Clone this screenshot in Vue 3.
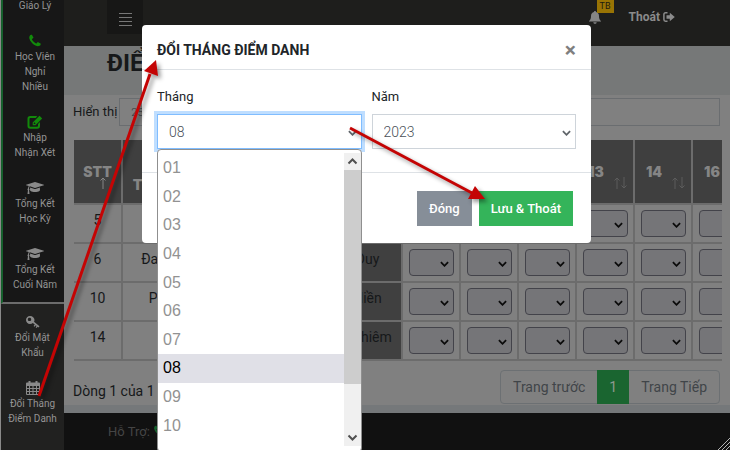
<template>
  <div class="page">
    <aside class="sidebar">
      <nav class="menu menu-main">
        <a v-for="item in mainMenu" :key="item.lines.join()" href="#" class="menu-item">
          <svg v-if="item.icon" class="menu-icon" :class="item.tone" :viewBox="icons[item.icon].box">
            <path :d="icons[item.icon].d" fill-rule="evenodd" />
          </svg>
          <span v-for="line in item.lines" :key="line">{{ line }}</span>
        </a>
      </nav>
      <nav class="menu menu-user">
        <a v-for="item in userMenu" :key="item.lines.join()" href="#" class="menu-item">
          <svg class="menu-icon" :viewBox="icons[item.icon].box">
            <path :d="icons[item.icon].d" fill-rule="evenodd" />
          </svg>
          <span v-for="line in item.lines" :key="line">{{ line }}</span>
        </a>
      </nav>
    </aside>

    <main class="main">
      <header class="topbar">
        <button class="toggle" type="button" aria-label="Menu">
          <i></i><i></i><i></i><i></i>
        </button>
        <div class="topbar-right">
          <span class="bell">
            <svg viewBox="0 0 12 13"><path d="M6 0c.6 0 1 .4 1 1 2 .5 3 2 3 4 0 2.700.6 3.900 2 5v.6H0V10c1.400-1.100 2-2.300 2-5 0-2 1-3.500 3-4 0-.6.4-1 1-1zM4.300 11.200h3.400C7.500 12.200 7 12.800 6 12.800s-1.500-.6-1.700-1.600z" /></svg>
            <b class="badge">TB</b>
          </span>
          <a href="#" class="logout">
            Thoát
            <svg viewBox="0 0 12 10"><path d="M4.500.8H2.500C1.500.8.9 1.500.9 2.500v5c0 1 .6 1.700 1.600 1.700h2" fill="none" stroke="currentColor" stroke-width="1.500" /><path d="M3.500 3.300h3.300V.8L11.800 5 6.800 9.200V6.700H3.500z" /></svg>
          </a>
        </div>
      </header>

      <h1 class="title">ĐIỂM DANH</h1>

      <section class="content">
        <div class="filter">
          <label for="rows">Hiển thị</label>
          <select id="rows" v-model="rows" class="rows">
            <option>25</option>
            <option>50</option>
          </select>
        </div>

        <div class="table-wrap">
          <table>
            <colgroup>
              <col class="c-stt"><col class="c-saint"><col class="c-family"><col class="c-name">
              <col v-for="(d, i) in days" :key="i" class="c-day">
            </colgroup>
            <thead>
              <tr>
                <th class="stt">STT
                  <svg class="sort-up" viewBox="0 0 6 12"><path d="M3 12V1M.5 3.500 3 1l2.500 2.500" /></svg>
                </th>
                <th class="saint">TÊN<br>THÁNH</th>
                <th></th>
                <th></th>
                <th v-for="(d, i) in days" :key="i" class="day">{{ d }}
                  <svg class="sort" viewBox="0 0 13 12"><path d="M3 12V1M.5 3.500 3 1l2.500 2.500M10 0v11M7.500 8.500 10 11l2.500-2.500" /></svg>
                </th>
              </tr>
            </thead>
            <tbody>
              <tr v-for="s in students" :key="s.stt">
                <td>{{ s.stt }}</td>
                <td>{{ s.saint }}</td>
                <td></td>
                <td class="name">{{ s.name }}</td>
                <td v-for="(d, i) in days" :key="i" class="mark">
                  <div class="mark-box">
                    <select :aria-label="'Ngày ' + d"><option></option><option>P</option><option>V</option></select>
                    <svg class="caret" viewBox="0 0 10 6"><path d="M1 1l4 4 4-4" /></svg>
                  </div>
                </td>
              </tr>
            </tbody>
          </table>
        </div>

        <div class="table-foot">
          <span class="summary">Dòng 1 của 1</span>
          <nav class="pages">
            <a href="#">Trang trước</a>
            <a href="#" class="active">1</a>
            <a href="#">Trang Tiếp</a>
          </nav>
        </div>
      </section>

      <footer class="footer">
        Hỗ Trợ:
        <svg class="menu-icon" :viewBox="icons.phone.box"><path :d="icons.phone.d" /></svg>
      </footer>
    </main>

    <div class="overlay">
      <form class="modal" role="dialog" aria-labelledby="modal-title" @submit.prevent>
        <div class="modal-header">
          <h2 id="modal-title">ĐỔI THÁNG ĐIỂM DANH</h2>
          <button type="button" class="close" aria-label="Đóng">×</button>
        </div>
        <div class="modal-body">
          <div class="field">
            <label for="month">Tháng</label>
            <div class="control">
              <select id="month" v-model="month" class="focused">
                <option v-for="m in months" :key="m">{{ m }}</option>
              </select>
              <svg class="caret" viewBox="0 0 10 6"><path d="M1 1l4 4 4-4" /></svg>
              <div class="dropdown">
                <ul role="listbox" aria-label="Tháng">
                  <li
                    v-for="m in months"
                    :key="m"
                    role="option"
                    :aria-selected="m === month"
                    :class="{ selected: m === month }"
                    @click="month = m"
                  >{{ m }}</li>
                </ul>
                <div class="scrollbar">
                  <svg viewBox="0 0 17 17"><path d="M4.500 10.500l4-4 4 4" /></svg>
                  <div class="thumb"></div>
                  <svg viewBox="0 0 17 17"><path d="M4.500 6.500l4 4 4-4" /></svg>
                </div>
              </div>
            </div>
          </div>
          <div class="field">
            <label for="year">Năm</label>
            <div class="control">
              <select id="year" v-model="year">
                <option>2022</option>
                <option>2023</option>
              </select>
              <svg class="caret" viewBox="0 0 10 6"><path d="M1 1l4 4 4-4" /></svg>
            </div>
          </div>
        </div>
        <div class="modal-footer">
          <button type="button" class="btn btn-grey">Đóng</button>
          <button type="submit" class="btn btn-green">Lưu &amp; Thoát</button>
        </div>
      </form>
    </div>

    <!-- guide arrows -->
    <svg class="arrows" width="730" height="450" viewBox="0 0 730 450">
      <path d="M39 396L150 74" />
      <path class="head" d="M156 60l-12 11 14 5z" />
      <path d="M350 128L472 193" />
      <path class="head" d="M485 199l-10-13-7 13z" />
    </svg>
    <svg class="grip" viewBox="0 0 12 12"><path d="M0 12L12 0M4 12l8-8M8 12l4-4" /></svg>
  </div>
</template>

<script setup>
import { ref } from 'vue'

const month = ref('08')
const year = ref('2023')
const rows = ref('25')

const months = Array.from({ length: 10 }, (_, i) => String(i + 1).padStart(2, '0'))
const days = ['', '', '', '13', '14', '16']

const students = [
  { stt: 5, saint: '', name: '' },
  { stt: 6, saint: 'Đa Minh', name: 'Duy' },
  { stt: 10, saint: 'Phêrô', name: 'Hiền' },
  { stt: 14, saint: '', name: 'Nghiêm' }
]

const mainMenu = [
  { lines: ['Giáo Lý'] },
  { icon: 'phone', tone: 'green', lines: ['Học Viên', 'Nghỉ', 'Nhiều'] },
  { icon: 'edit', tone: 'green', lines: ['Nhập', 'Nhận Xét'] },
  { icon: 'cap', lines: ['Tổng Kết', 'Học Kỳ'] },
  { icon: 'cap', lines: ['Tổng Kết', 'Cuối Năm'] }
]
const userMenu = [
  { icon: 'key', lines: ['Đổi Mật', 'Khẩu'] },
  { icon: 'calendar', lines: ['Đổi Tháng', 'Điểm Danh'] }
]

const icons = {
  phone: {
    box: '-100 32 1608 1720',
    d: 'M1408 1240q0 27-10 70.5t-21 68.5q-21 50-122 106-94 51-186 51-27 0-53-3.5t-57.5-12.5-47-14.5-55.5-20.5-49-18q-98-35-175-83-127-79-264-216t-216-264q-48-77-83-175-3-9-18-49t-20.5-55.5-14.5-47-12.5-57.5-3.5-53q0-92 51-186 56-101 106-122 25-11 68.5-21t70.5-10q14 0 21 3 18 6 53 76 11 19 30 54t35 63.5 31 53.5q3 4 17.5 25t21.5 35.5 7 28.5q0 20-28.5 50t-62 55-62 53-28.5 46q0 9 5 22.5t8.5 20.5 14 24 11.5 19q76 137 174 235t235 174q2 1 19 11.5t24 14 20.5 8.5 22.5 5q18 0 46-28.5t53-62 55-62 50-28.5q14 0 28.5 7t35.5 21.5 25 17.5q25 15 53.5 31t63.5 35 54 30q70 35 76 53 3 7 3 21z'
  },
  edit: {
    box: '0 0 15 14',
    d: 'M2.600 1h7.200L8.300 3H2.800C2.200 3 2 3.300 2 3.900v6.900c0 .7.2.9.8.9h6.800c.7 0 .9-.2.9-.9V8.900l2-1.900v4c0 1.800-1 2.700-2.700 2.700H2.600C1 13.700 0 12.700 0 11V3.700C0 2 1 1 2.600 1zM12 .7l2.700 2.700-6.700 6.800H5.200V7.400zM6.300 8v1.100h1.100l.7-.7L7 7.300z'
  },
  cap: {
    box: '0 130 2304 1536',
    d: 'M1774 836l18 316q4 69-82 128t-235 93.5-323 34.5-323-34.5-235-93.5-82-128l18-316 574 181q22 7 48 7t48-7zM2304 512q0 23-22 31l-1120 352q-4 1-10 1t-10-1l-652-206q-43 34-71 111.5t-34 178.5q63 36 63 109 0 69-58 107l58 433q2 14-8 25-9 11-24 11h-192q-15 0-24-11-10-11-8-25l58-433q-58-38-58-107 0-73 65-111 11-207 98-330l-333-104q-22-8-22-31t22-31l1120-352q4-1 10-1t10 1l1120 352q22 8 22 31z'
  },
  key: {
    box: '0 0 15 14',
    d: 'M4.500 1C7 1 9 2.700 9 5c0 .7-.2 1.300-.5 1.800l5.500 4.400-1 1.200-.9-.7-1 1.300-1-.8 1-1.300-.8-.6-1.200 1.500-1-.8L9.300 9.500 7.300 7.900C6.600 8.600 5.600 9 4.500 9 2.200 9 .5 7.300.5 5S2.200 1 4.500 1zM4 2.800c-1.100 0-1.700.7-1.700 1.600S3 6 4 6s1.700-.7 1.700-1.600S5.100 2.800 4 2.800z'
  },
  calendar: {
    box: '0 0 14 14',
    d: 'M1 1.500h1.500V0h2v1.500h5V0h2v1.500H13q1 0 1 1V13q0 1-1 1H1q-1 0-1-1V2.500q0-1 1-1zM1 5v2h2V5zM4 5v2h2.500V5zM7.500 5v2H10V5zM11 5v2h2V5zM1 8v2h2V8zM4 8v2h2.500V8zM7.500 8v2H10V8zM11 8v2h2V8zM1 11v2h2v-2zM4 11v2h2.500v-2zM7.500 11v2H10v-2zM11 11v2h2v-2z'
  }
}
</script>

<style>
body {
  margin: 0;
  background: #808080;
}
</style>

<style scoped>
* {
  box-sizing: border-box;
}

.page {
  position: relative;
  display: flex;
  height: 100vh;
  overflow: hidden;
  font-family: Roboto, "Liberation Sans", sans-serif;
  font-size: 14px;
  color: #16181a;
}

a {
  color: inherit;
  text-decoration: none;
}

.sidebar {
  width: 64px;
  flex: none;
  display: flex;
  flex-direction: column;
  border-left: 1px solid #8a8a8a;
  background: #212120;
}

.menu-main {
  margin-top: -13px;
  padding-left: 3px;
  border-left: 2px solid #16602d;
  border-bottom: 2px solid #6c6c6c;
  background: #171717;
}

.menu-item {
  display: flex;
  flex-direction: column;
  align-items: center;
  padding: 11px 0 10px;
  font-size: 10px;
  line-height: 15px;
  color: #949494;
}

.menu-icon {
  width: 18px;
  height: 14px;
  margin-bottom: 1px;
  fill: #8a8a8a;
}

.green {
  fill: #128a0b;
}

.main {
  flex: 1;
  min-width: 0;
  display: flex;
  flex-direction: column;
}

.topbar {
  height: 46px;
  flex: none;
  display: flex;
  justify-content: space-between;
  padding: 0 55px 0 43px;
  background: #1e1e1c;
}

.toggle {
  width: 36px;
  height: 34px;
  padding: 4px 0 0;
  border: 0;
  background: #171716;
  display: flex;
  flex-direction: column;
  align-items: center;
  justify-content: center;
  gap: 3px;
}

.toggle i {
  width: 13px;
  height: 1px;
  background: #777;
}

.topbar-right {
  display: flex;
  align-items: center;
  gap: 28px;
  height: 34px;
}

.bell {
  position: relative;
  height: 13px;
}

.bell svg {
  display: block;
  width: 12px;
  height: 13px;
  fill: #858585;
}

.badge {
  position: absolute;
  left: 8px;
  top: -11px;
  width: 17px;
  height: 13px;
  background: #997404;
  color: #1c1a10;
  font-size: 9px;
  font-weight: 400;
  line-height: 13px;
  text-align: center;
}

.logout {
  display: flex;
  align-items: center;
  gap: 3px;
  font-size: 12px;
  font-weight: 700;
  color: #8b8b8b;
}

.logout svg {
  width: 12px;
  height: 10px;
  fill: currentColor;
}

.title {
  margin: 0;
  height: 49px;
  flex: none;
  padding: 0 43px;
  background: #767878;
  font-size: 24px;
  line-height: 34px;
  font-weight: 700;
}

.content {
  flex: 1;
  padding: 3px 8px 0 9px;
  border-bottom: 8px solid #75787a;
  background: #808080;
}

.filter {
  display: flex;
  align-items: center;
  gap: 2px;
  padding-right: 2px;
}

.filter label {
  padding-bottom: 2px;
  font-size: 13px;
}

.rows {
  flex: 1;
  height: 28px;
  appearance: none;
  border: 1px solid #6a6d70;
  border-radius: 0;
  padding: 0 11px;
  background: transparent;
  font: 300 11px Roboto, sans-serif;
  color: #33373b;
}

.table-wrap {
  overflow: hidden;
  margin-top: 14px;
  margin-left: 1px;
}

table {
  table-layout: fixed;
  width: 677px;
  border-collapse: collapse;
}

.c-stt {
  width: 48px;
}

.c-saint {
  width: 90px;
}

.c-family {
  width: 93px;
}

.c-name {
  width: 97px;
}

.c-day {
  width: 58px;
}

th,
td {
  padding: 0;
  border-right: 2px solid #6c6c6c;
  border-bottom: 2px solid #6c6c6c;
  text-align: center;
}

th {
  height: 64px;
  background: #3f3f3f;
  color: #858585;
  font-family: Inter, sans-serif;
  font-weight: 900;
  font-size: 14px;
  line-height: 26px;
}

.stt,
.day {
  position: relative;
}

.saint {
  padding-right: 16px;
}

.sort,
.sort-up {
  position: absolute;
  bottom: 14px;
  height: 12px;
  fill: none;
  stroke: #5c5c5c;
}

.sort-up {
  left: 26px;
  width: 6px;
  stroke: #858585;
}

.sort {
  right: 6px;
  width: 13px;
}

.day {
  padding-right: 18px;
}

td {
  height: 39px;
  padding-bottom: 8px;
}

.name {
  padding-left: 28px;
  background: #404040;
}

.mark {
  padding: 0 0 0 6px;
}

.mark-box {
  position: relative;
  width: 45px;
  height: 27px;
}

.mark-box select {
  width: 100%;
  height: 100%;
  appearance: none;
  border: 1px solid #43434a;
  border-radius: 4px;
  background: #757578;
}

.caret {
  position: absolute;
  right: 5px;
  top: 50%;
  width: 9px;
  height: 6px;
  margin-top: -2px;
  fill: none;
  stroke: #0b0b0b;
  stroke-width: 2;
  pointer-events: none;
}

.table-foot {
  display: flex;
  justify-content: space-between;
  align-items: center;
  margin-top: 9px;
  padding-right: 2px;
}

.summary {
  padding-top: 8px;
}

.pages {
  display: flex;
  height: 34px;
  border: 1px solid #6c7073;
  border-radius: 4px;
  line-height: 32px;
  color: #404549;
}

.pages a {
  padding: 0 12px;
}

.pages .active {
  margin: -1px 0;
  line-height: 34px;
  background: #1a6530;
  color: #8e9990;
}

.footer {
  height: 37px;
  flex: none;
  display: flex;
  align-items: center;
  gap: 3px;
  padding: 0 44px;
  background: #111;
  font-size: 13px;
  color: #454545;
}

.footer .menu-icon {
  width: 12px;
  height: 12px;
  fill: #15602c;
}

.overlay {
  position: absolute;
  inset: 0;
  display: flex;
  justify-content: center;
  align-items: flex-start;
  padding: 25px 0 0 3px;
}

.modal {
  width: 449px;
  border-radius: 4px;
  background: #fff;
  color: #212529;
}

.modal-header {
  display: flex;
  justify-content: space-between;
  align-items: center;
  height: 45px;
  padding: 6px 15px 0;
  border-bottom: 1px solid #dee2e6;
}

.modal-header h2 {
  margin: 0;
  font-size: 14px;
  font-weight: 700;
}

.close {
  padding: 0;
  border: 0;
  background: none;
  font: 700 21px/24px Roboto, sans-serif;
  color: #7f7f7f;
}

.modal-body {
  display: flex;
  gap: 10px;
  padding: 17px 15px 23px;
  border-bottom: 1px solid #dee2e6;
}

.field {
  flex: 1;
}

.field label {
  display: block;
  margin-bottom: 7px;
  font-size: 13px;
  line-height: 20px;
}

.control {
  position: relative;
}

.control > select {
  display: block;
  width: 100%;
  height: 35px;
  appearance: none;
  border: 1px solid #ced4da;
  border-radius: 0;
  padding: 0 11px;
  background: #fff;
  font: 300 14px Roboto, sans-serif;
  color: #495057;
}

.control > select.focused {
  border-color: #80bdff;
  outline: 3px solid #bfdeff;
}

.control .caret {
  stroke: #60656a;
}

.dropdown {
  position: absolute;
  top: 35px;
  left: 0;
  right: 0;
  height: 303px;
  display: flex;
  padding: 3px 0 4px;
  border: 1px solid #8f8f8f;
  border-radius: 4px;
  background: #fff;
}

.dropdown ul {
  flex: 1;
  display: flex;
  flex-direction: column;
  margin: 0;
  padding: 1px 0 7px;
  list-style: none;
  font: 16px "Liberation Sans", sans-serif;
  color: #929292;
}

.dropdown li {
  flex: 1;
  display: flex;
  align-items: center;
  padding-left: 5px;
}

.dropdown .selected {
  background: #e0e0e7;
  color: #000;
}

.scrollbar {
  width: 17px;
  height: 293px;
  display: flex;
  flex-direction: column;
  background: #f0f0f0;
}

.scrollbar svg {
  width: 17px;
  height: 17px;
  fill: none;
  stroke: #505050;
  stroke-width: 2;
}

.scrollbar svg:last-child {
  margin-top: auto;
}

.thumb {
  height: 214px;
  background: #cdcdcd;
}

.modal-footer {
  display: flex;
  justify-content: flex-end;
  gap: 7px;
  padding: 18px 18px 17px;
}

.btn {
  height: 35px;
  padding: 0 12px;
  border: 0;
  font: 500 13px Roboto, sans-serif;
  color: #fff;
}

.btn-grey {
  background: #868e98;
}

.btn-green {
  background: #34b45a;
}

.arrows {
  position: absolute;
  left: 0;
  top: 0;
  fill: none;
  stroke: #c40404;
  stroke-width: 3;
  pointer-events: none;
  filter: drop-shadow(3px 3px 2px rgba(0, 0, 0, 0.4));
}

.arrows .head {
  fill: #c40404;
  stroke: none;
}

.grip {
  position: absolute;
  right: 0;
  bottom: 0;
  width: 12px;
  height: 12px;
  stroke: #b5b5b5;
}
</style>
